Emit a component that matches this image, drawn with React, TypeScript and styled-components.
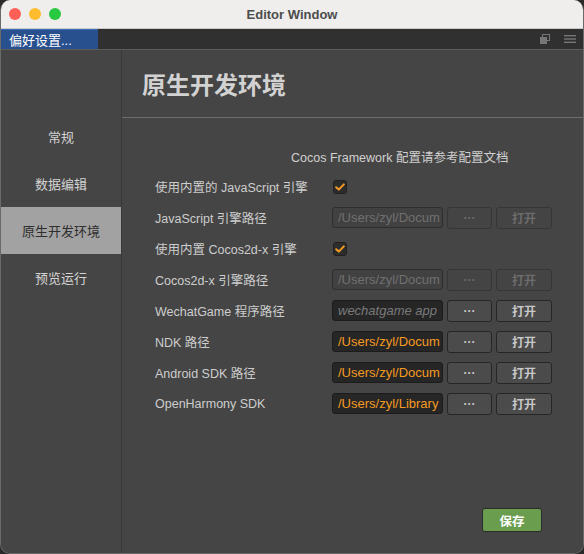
import React from "react";
import styled, { createGlobalStyle } from "styled-components";

const GlobalStyle = createGlobalStyle`
  html, body {
    margin: 0;
    padding: 0;
    background: #2a2a2a;
  }
  body {
    font-family: "Liberation Sans", "Noto Sans CJK SC", sans-serif;
  }
`;

type Row =
  | { kind: "check"; label: string }
  | { kind: "path"; label: string; value: string; state: "disabled" | "empty" | "set" };

const rows: Row[] = [
  { kind: "check", label: "使用内置的 JavaScript 引擎" },
  { kind: "path", label: "JavaScript 引擎路径", value: "/Users/zyl/Docum", state: "disabled" },
  { kind: "check", label: "使用内置 Cocos2d-x 引擎" },
  { kind: "path", label: "Cocos2d-x 引擎路径", value: "/Users/zyl/Docum", state: "disabled" },
  { kind: "path", label: "WechatGame 程序路径", value: "wechatgame app", state: "empty" },
  { kind: "path", label: "NDK 路径", value: "/Users/zyl/Docum", state: "set" },
  { kind: "path", label: "Android SDK 路径", value: "/Users/zyl/Docum", state: "set" },
  { kind: "path", label: "OpenHarmony SDK", value: "/Users/zyl/Library", state: "set" },
];

const menu = ["常规", "数据编辑", "原生开发环境", "预览运行"];

const App = () => {
  return (
    <>
      <GlobalStyle />
      <Window>
        <TitleBar>
          <Lights>
            <Light color="#fe5f57" />
            <Light color="#febc2e" />
            <Light color="#28c840" />
          </Lights>
          <Title>Editor Window</Title>
        </TitleBar>
        <TabBar>
          <Tab>偏好设置...</Tab>
          <TabTools>
            <svg width="12" height="12" viewBox="0 0 12 12">
              <rect x="3.5" y="1.5" width="7" height="6" fill="none" stroke="#777" />
              <rect x="1" y="4" width="7" height="7" fill="#777" />
            </svg>
            <svg width="14" height="12" viewBox="0 0 14 12">
              <rect x="1" y="2" width="12" height="1.4" fill="#777" />
              <rect x="1" y="5.3" width="12" height="1.4" fill="#777" />
              <rect x="1" y="8.6" width="12" height="1.4" fill="#777" />
            </svg>
          </TabTools>
        </TabBar>
        <Body>
          <Sidebar>
            {menu.map((m) => (
              <MenuItem key={m} $active={m === "原生开发环境"}>
                {m}
              </MenuItem>
            ))}
          </Sidebar>
          <Main>
            <Header>原生开发环境</Header>
            <Note>Cocos Framework 配置请参考配置文档</Note>
            <Form>
              {rows.map((r) => (
                <FormRow key={r.label}>
                  <Label>{r.label}</Label>
                  {r.kind === "check" ? (
                    <Check>
                      <svg width="10" height="8" viewBox="0 0 10 8">
                        <path d="M1.2 4.2 L3.8 6.6 L8.8 1.4" fill="none" stroke="#f59a23" strokeWidth="2" strokeLinecap="round" strokeLinejoin="round" />
                      </svg>
                    </Check>
                  ) : (
                    <Controls>
                      <PathInput $state={r.state}>{r.value}</PathInput>
                      <Btn $w={45} $disabled={r.state === "disabled"}>···</Btn>
                      <Btn $w={56} $disabled={r.state === "disabled"}>打开</Btn>
                    </Controls>
                  )}
                </FormRow>
              ))}
            </Form>
            <Footer>
              <SaveButton>保存</SaveButton>
            </Footer>
          </Main>
        </Body>
      </Window>
    </>
  );
};

const Window = styled.div`
  width: 584px;
  height: 554px;
  box-sizing: border-box;
  display: flex;
  flex-direction: column;
  border-radius: 10px;
  overflow: hidden;
  background: #454545;
  border: 1px solid #6a6a6a;
  border-top: none;
`;

const TitleBar = styled.div`
  height: 28px;
  flex: none;
  position: relative;
  display: flex;
  align-items: center;
  justify-content: center;
  background: #efeeec;
  border-bottom: 1px solid #c9c9c9;
`;

const Lights = styled.div`
  position: absolute;
  left: 8px;
  top: 8px;
  display: flex;
  gap: 8px;
`;

const Light = styled.span<{ color: string }>`
  width: 12px;
  height: 12px;
  border-radius: 50%;
  background: ${({ color }) => color};
`;

const Title = styled.div`
  font-size: 13px;
  font-weight: bold;
  color: #4c4c4c;
`;

const TabBar = styled.div`
  height: 20px;
  flex: none;
  display: flex;
  align-items: stretch;
  justify-content: space-between;
  background: #303030;
  border-bottom: 1px solid #5c5c5c;
`;

const Tab = styled.div`
  width: 97px;
  box-sizing: border-box;
  padding-left: 8px;
  display: flex;
  align-items: center;
  font-size: 13px;
  color: #ffffff;
  background: #28508f;
  border-top: 1px solid #3a6bb8;
`;

const TabTools = styled.div`
  display: flex;
  align-items: center;
  gap: 12px;
  padding-right: 6px;
`;

const Body = styled.div`
  flex: 1;
  display: flex;
  min-height: 0;
`;

const Sidebar = styled.div`
  width: 120px;
  flex: none;
  padding-top: 63px;
  background: #454545;
  border-right: 1px solid #393939;
`;

const MenuItem = styled.div<{ $active?: boolean }>`
  height: 47px;
  display: flex;
  align-items: center;
  justify-content: center;
  font-size: 13px;
  color: ${({ $active }) => ($active ? "#2e2e2e" : "#d4d4d4")};
  background: ${({ $active }) => ($active ? "#a2a2a2" : "transparent")};
`;

const Main = styled.div`
  flex: 1;
  display: flex;
  flex-direction: column;
  background: #454545;
`;

const Header = styled.div`
  height: 68px;
  box-sizing: border-box;
  padding-left: 20px;
  display: flex;
  align-items: center;
  font-size: 24px;
  font-weight: bold;
  color: #d2d2d2;
  border-bottom: 1px solid #6e6e6e;
`;

const Note = styled.div`
  margin-top: 30px;
  padding-left: 169px;
  font-size: 12.5px;
  line-height: 20px;
  color: #d0d0d0;
`;

const Form = styled.div`
  margin-top: 3px;
  display: flex;
  flex-direction: column;
`;

const FormRow = styled.div`
  height: 31px;
  display: grid;
  grid-template-columns: 177px 1fr;
  align-items: center;
  padding-left: 33px;
`;

const Label = styled.div`
  font-size: 12.5px;
  color: #cdcdcd;
  white-space: nowrap;
`;

const Check = styled.div`
  width: 14px;
  height: 14px;
  box-sizing: border-box;
  margin-left: 1px;
  display: flex;
  align-items: center;
  justify-content: center;
  background: #2c2c2c;
  border: 1px solid #202020;
  border-radius: 3px;
`;

const Controls = styled.div`
  display: flex;
  gap: 4px;
`;

const PathInput = styled.div<{ $state: "disabled" | "empty" | "set" }>`
  width: 111px;
  height: 21px;
  box-sizing: border-box;
  padding: 0 5px;
  display: flex;
  align-items: center;
  overflow: hidden;
  white-space: nowrap;
  font-size: 13px;
  border-radius: 3px;
  font-style: ${({ $state }) => ($state === "empty" ? "italic" : "normal")};
  color: ${({ $state }) =>
    $state === "set" ? "#f59a23" : $state === "empty" ? "#7a7a7a" : "#707070"};
  background: ${({ $state }) => ($state === "disabled" ? "#414141" : "#262626")};
  border: 1px solid ${({ $state }) => ($state === "disabled" ? "#2e2e2e" : "#1c1c1c")};
`;

const Btn = styled.div<{ $w: number; $disabled?: boolean }>`
  width: ${({ $w }) => $w}px;
  height: 22px;
  box-sizing: border-box;
  display: flex;
  align-items: center;
  justify-content: center;
  font-size: 12px;
  font-weight: bold;
  border-radius: 3px;
  color: ${({ $disabled }) => ($disabled ? "#6c6c6c" : "#c8c8c8")};
  background: ${({ $disabled }) => ($disabled ? "#444444" : "#4b4b4b")};
  border: 1px solid ${({ $disabled }) => ($disabled ? "#363636" : "#262626")};
`;

const Footer = styled.div`
  margin-top: auto;
  padding: 0 41px 21px 0;
  display: flex;
  justify-content: flex-end;
`;

const SaveButton = styled.div`
  width: 60px;
  height: 24px;
  box-sizing: border-box;
  display: flex;
  align-items: center;
  justify-content: center;
  font-size: 12.5px;
  font-weight: bold;
  color: #ffffff;
  background: #6a9d4e;
  border: 1px solid #2c2c2c;
  border-radius: 3px;
`;

export default App;
